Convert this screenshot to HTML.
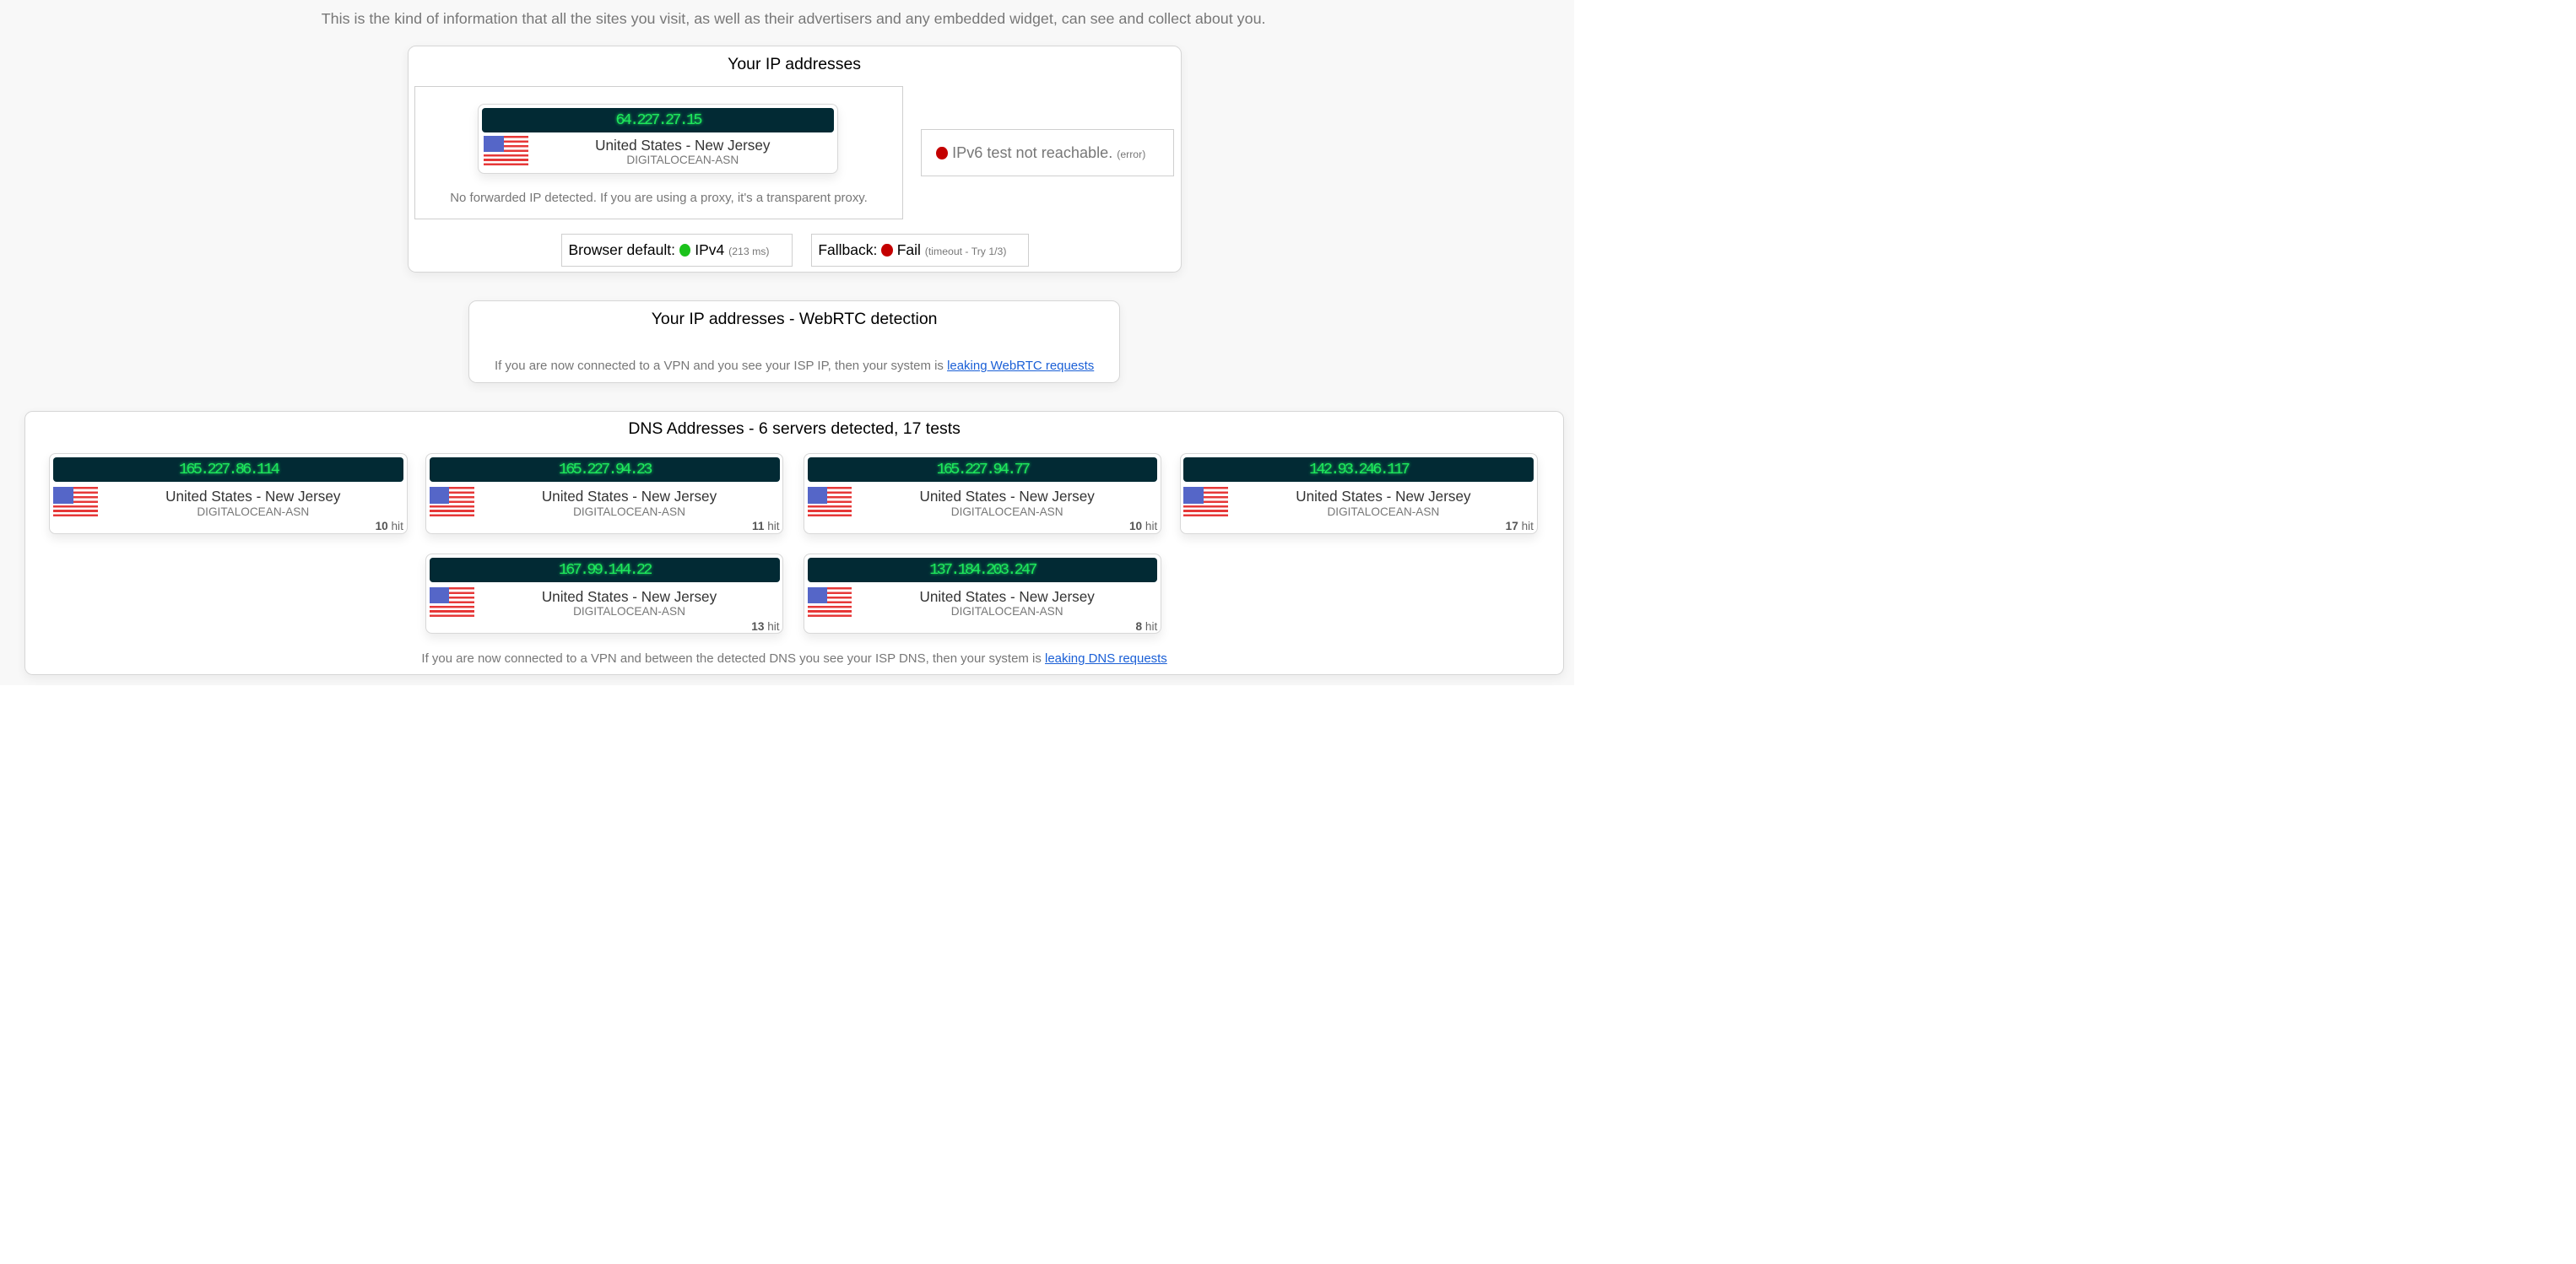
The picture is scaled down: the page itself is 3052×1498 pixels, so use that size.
<!DOCTYPE html>
<html><head><meta charset="utf-8"><style>
html,body{margin:0;padding:0;background:#fff;width:3052px;height:1498px;overflow:hidden}
#w{zoom:1.9464;position:relative;width:1568px;height:770px;font-family:"Liberation Sans",sans-serif}
.bg{position:absolute;left:0;top:0;width:958px;height:417px;background:#f8f8f8}
.a{position:absolute}
.box{position:absolute;background:#fff;border:1px solid #d6d6d6;border-radius:5px;box-shadow:0 2px 6px rgba(0,0,0,.06)}
.sq{position:absolute;background:#fff;border:1px solid #cfcfcf}
.t{position:absolute;left:0;right:0;text-align:center;font-size:10px;color:#000}
.card{position:absolute;width:217px;height:48px;background:#fff;border:1px solid #d8d8d8;border-radius:4px;box-shadow:0 3px 6px rgba(0,0,0,.08)}
.ip{position:absolute;left:2px;right:2px;top:2px;height:15px;background:#022a34;border-radius:2px;color:#1ee85c;font-family:"Liberation Mono",monospace;font-size:9.5px;line-height:15px;text-align:center;letter-spacing:-1.4px;text-shadow:0 0 2px #1ee85c}
.flag{position:absolute;left:2px;top:20px;width:27px;height:18px;background:repeating-linear-gradient(#e63838 0 1.4px,#fff 1.4px 2.8px)}
.flag:before{content:"";position:absolute;left:0;top:0;width:12px;height:10px;background:#5566c8}
.c{position:absolute;left:30px;right:0;top:21px;text-align:center;font-size:8.8px;color:#333}
.asn{position:absolute;left:30px;right:0;top:31px;text-align:center;font-size:7px;color:#777}
.hit{position:absolute;right:2px;top:40px;font-size:7px;color:#666}
.hit b{color:#555}
.dot{display:inline-block;width:7px;height:8px;border-radius:50%;vertical-align:-1px}
a{color:#1a5fd6;text-decoration:underline}
</style></head><body><div id="w">
<div class="bg"></div>
<div class="a" style="left:0;width:966px;top:6px;text-align:center;font-size:9.2px;color:#777">This is the kind of information that all the sites you visit, as well as their advertisers and any embedded widget, can see and collect about you.</div>

<div class="box" style="left:248px;top:28px;width:470px;height:137px">
 <div class="t" style="top:5px">Your IP addresses</div>
 <div class="sq" style="left:4px;top:24px;width:296px;height:80px">
  <div class="card" style="left:38px;top:10px;width:218px;height:42px">
   <div class="ip">64.227.27.15</div>
   <div class="flag" style="left:3px;top:19px"></div>
   <div class="c" style="top:20px">United States - New Jersey</div>
   <div class="asn" style="top:30px">DIGITALOCEAN-ASN</div>
  </div>
  <div class="a" style="left:0;right:0;top:63px;text-align:center;font-size:7.7px;color:#777">No forwarded IP detected. If you are using a proxy, it's a transparent proxy.</div>
 </div>
 <div class="sq" style="left:312px;top:50px;width:153px;height:28px">
  <div class="a" style="left:9px;top:9px;font-size:9.3px;color:#777;white-space:nowrap"><span class="dot" style="background:#c40000"></span> IPv6 test not reachable. <span style="font-size:6.3px">(error)</span></div>
 </div>
 <div class="sq" style="left:93px;top:114px;width:140px;height:19px">
  <div class="a" style="left:4px;top:4px;font-size:9px;color:#000;white-space:nowrap">Browser default: <span class="dot" style="background:#1bc21b"></span> IPv4 <span style="font-size:6.3px;color:#777">(213 ms)</span></div>
 </div>
 <div class="sq" style="left:245px;top:114px;width:132px;height:19px">
  <div class="a" style="left:4px;top:4px;font-size:9px;color:#000;white-space:nowrap">Fallback: <span class="dot" style="background:#c40000"></span> Fail <span style="font-size:6.3px;color:#777">(timeout - Try 1/3)</span></div>
 </div>
</div>

<div class="box" style="left:285px;top:183px;width:396px;height:49px">
 <div class="t" style="top:5px">Your IP addresses - WebRTC detection</div>
 <div class="a" style="left:0;right:0;top:35px;text-align:center;font-size:7.7px;color:#777">If you are now connected to a VPN and you see your ISP IP, then your system is <a>leaking WebRTC requests</a></div>
</div>

<div class="box" style="left:15px;top:250px;width:936px;height:160px">
 <div class="t" style="top:5px">DNS Addresses - 6 servers detected, 17 tests</div>
 <div class="a" style="left:0;right:0;top:146px;text-align:center;font-size:7.7px;color:#777">If you are now connected to a VPN and between the detected DNS you see your ISP DNS, then your system is <a>leaking DNS requests</a></div>
</div>

<div class="card" style="left:30px;top:276px"><div class="ip">165.227.86.114</div><div class="flag"></div><div class="c">United States - New Jersey</div><div class="asn">DIGITALOCEAN-ASN</div><div class="hit"><b>10</b> hit</div></div>
<div class="card" style="left:259px;top:276px"><div class="ip">165.227.94.23</div><div class="flag"></div><div class="c">United States - New Jersey</div><div class="asn">DIGITALOCEAN-ASN</div><div class="hit"><b>11</b> hit</div></div>
<div class="card" style="left:489px;top:276px"><div class="ip">165.227.94.77</div><div class="flag"></div><div class="c">United States - New Jersey</div><div class="asn">DIGITALOCEAN-ASN</div><div class="hit"><b>10</b> hit</div></div>
<div class="card" style="left:718px;top:276px"><div class="ip">142.93.246.117</div><div class="flag"></div><div class="c">United States - New Jersey</div><div class="asn">DIGITALOCEAN-ASN</div><div class="hit"><b>17</b> hit</div></div>
<div class="card" style="left:259px;top:337px"><div class="ip">167.99.144.22</div><div class="flag"></div><div class="c">United States - New Jersey</div><div class="asn">DIGITALOCEAN-ASN</div><div class="hit"><b>13</b> hit</div></div>
<div class="card" style="left:489px;top:337px"><div class="ip">137.184.203.247</div><div class="flag"></div><div class="c">United States - New Jersey</div><div class="asn">DIGITALOCEAN-ASN</div><div class="hit"><b>8</b> hit</div></div>
</div></body></html>
